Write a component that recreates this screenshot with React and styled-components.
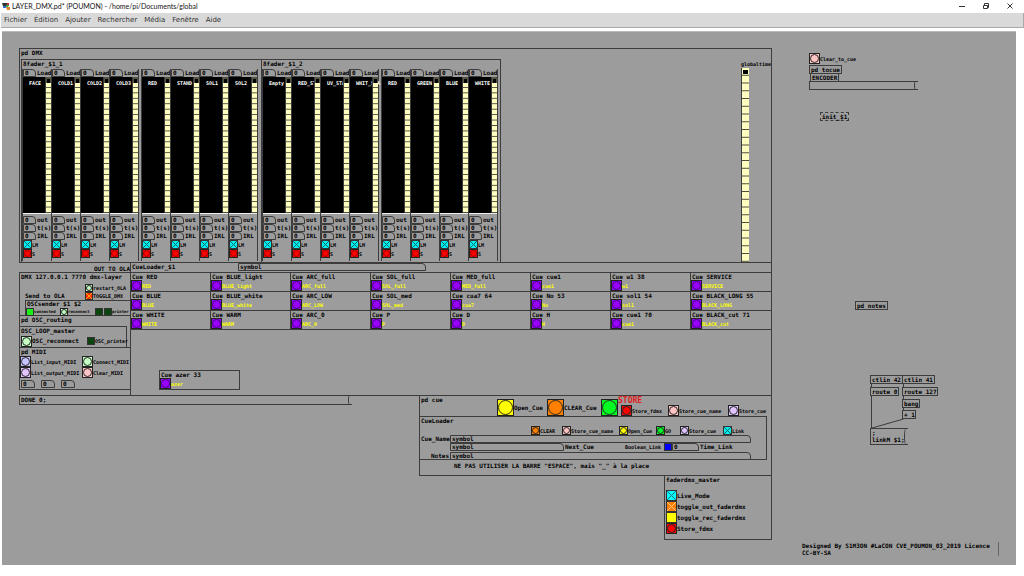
import React from 'react';
import styled, { createGlobalStyle, css } from 'styled-components';

const GlobalStyle = createGlobalStyle`
  * { box-sizing: border-box; }
  body { margin: 0; background: #fff; }
  button, input, label { font: inherit; color: inherit; }
`;

const ink = '#3c3c3c';
const gray = '#9c9c9c';
const mono = '"DejaVu Sans Mono", "Liberation Mono", monospace';

/* ---------- window ---------- */

const Window = styled.div`
  display: flex;
  flex-direction: column;
  min-width: 1000px;
`;

const TitleBar = styled.header`
  display: flex;
  align-items: center;
  height: 13px;
  padding: 0 9px 2px 2px;
  gap: 2px;
  font: 7px/12px Lato, "Open Sans", sans-serif;
  color: #111;
`;

const Title = styled.h1`
  flex: 1;
  margin: 0;
  font-size: 7px;
  font-weight: 400;
`;

const WindowButtons = styled.div`
  display: flex;
  gap: 14px;
`;

const WindowButton = styled.button`
  display: block;
  width: 10px;
  height: 10px;
  padding: 0;
  border: 0;
  background: none;
  svg { display: block; }
`;

const MenuBar = styled.nav`
  display: flex;
  align-items: center;
  gap: 7px;
  height: 15px;
  margin: 0 0 3px 1px;
  padding: 0 3px;
  background: #d9d9d9;
  border-right: 1px solid #aaa;
  border-bottom: 1px solid #aaa;
`;

const MenuItem = styled.button`
  padding: 0;
  border: 0;
  background: none;
  font: 7px/12px "DejaVu Sans", sans-serif;
  color: #333;
`;

const Canvas = styled.main`
  position: relative;
  margin: 0 8px 11px 2px;
  padding: 16px 0 25px 17px;
  background: ${gray};
  border-top: 1px solid #b8b8b8;
  color: #000;
  font: bold 6px/8px ${mono};
`;

/* ---------- controls ---------- */

const Control = styled.label`
  display: flex;
  align-items: center;
  min-width: 0;
  white-space: nowrap;
  font-size: ${p => p.$font || 5}px;
  color: ${p => p.$color || 'inherit'};
`;

const Bang = styled.button`
  display: grid;
  flex: none;
  width: ${p => p.$size}px;
  height: ${p => p.$size}px;
  padding: 0;
  border: 1px solid #222;
  background: ${p => p.$fill};
  font-size: 0;
  line-height: 0;
  &::before {
    content: '';
    border: 1px solid ${p => p.$ring || '#2a2a2a'};
    border-radius: 50%;
  }
`;

const Toggle = styled.input.attrs({ type: 'checkbox' })`
  appearance: none;
  flex: none;
  width: ${p => p.$size}px;
  height: ${p => p.$size}px;
  margin: 0;
  border: 1px solid #333;
  background: ${p => p.$fill};
  ${p => p.$cross && css`
    background:
      linear-gradient(45deg, transparent 45%, ${p.$cross} 45%, ${p.$cross} 55%, transparent 55%),
      linear-gradient(-45deg, transparent 45%, ${p.$cross} 45%, ${p.$cross} 55%, transparent 55%),
      ${p.$fill};
  `}
`;

const Entry = styled.input`
  display: block;
  flex: none;
  width: ${p => p.$width}px;
  height: 8px;
  margin: 0;
  padding: 0 1px;
  border: 1px solid ${ink};
  border-radius: 0 4px 0 0;
  background: ${gray};
  outline: 0;
`;

function BangControl({ text, size, fill, font, color, ring }) {
  return (
    <Control $font={font} $color={color}>
      <Bang type="button" $size={size} $fill={fill} $ring={ring} />
      {text}
    </Control>
  );
}

function ToggleControl({ text, size, fill, cross, font }) {
  return (
    <Control $font={font}>
      <Toggle $size={size} $fill={fill} $cross={cross} defaultChecked={Boolean(cross)} />
      {text}
    </Control>
  );
}

/* ---------- panels ---------- */

const Patch = styled.div`
  width: 753px;
`;

const Heading = styled.h2`
  margin: 0;
  padding-left: 1px;
  height: ${p => p.$height || 9}px;
  font-size: 6px;
  line-height: ${p => p.$line || 7}px;
  font-weight: bold;
  white-space: nowrap;
`;

const DmxPanel = styled.section`
  height: 215px;
  border: 1px solid ${ink};
`;

const DmxBody = styled.div`
  display: flex;
  padding-left: 1px;
`;

const Bank = styled.section`
  width: 240px;
  border: solid ${ink};
  border-width: 1px 0 0 1px;
  &:nth-child(2) { border-right-width: 1px; }
`;

const BankFaders = styled.div`
  display: flex;
  gap: 3px;
`;

const FaderGroup = styled.div`
  display: flex;
  box-shadow: 1px 0 ${ink};
`;

const Fader = styled.div`
  isolation: isolate;
  width: 29px;
  height: 192px;
  border-left: 1px solid ${ink};
  background: ${gray};
`;

const FaderRow = styled.label`
  display: flex;
  gap: 1px;
  height: 8px;
  overflow: hidden;
  white-space: nowrap;
`;

const FaderBody = styled.div`
  display: flex;
  height: 137px;
  margin-bottom: 2px;
  background: #000;
  border-bottom: 1px solid #eee;
`;

const FaderName = styled.span`
  flex: 1;
  min-width: 0;
  padding: 2px 0 0 6px;
  font-size: 5px;
  white-space: nowrap;
  color: #fff;
`;

const Scale = styled.input.attrs({ type: 'range' })`
  appearance: none;
  position: relative;
  display: block;
  flex: none;
  writing-mode: vertical-lr;
  width: ${p => p.$width}px;
  height: ${p => p.$height};
  margin: 0;
  border: solid ${ink};
  border-width: 0 0 0 1px;
  background:
    linear-gradient(#000, #000) 50% 2px / ${p => p.$width - 3}px 4px no-repeat,
    linear-gradient(${p => p.$head}, ${p => p.$head}) 0 0 / 100% 6px no-repeat,
    linear-gradient(to top, #4a4a3c 1px, #ffffbf 1px) 0 0 / 100% 4%;
  &::-webkit-slider-thumb { appearance: none; width: 0; height: 0; }
`;

const GlobalTime = styled.label`
  display: flex;
  flex-direction: column;
  margin-left: 240px;
  padding-top: 1px;
  width: 30px;
  font-size: 5px;
`;

const MidRow = styled.div`
  display: flex;
  height: 132px;
`;

const LeftColumn = styled.div`
  width: 112px;
`;

const OutLabel = styled.p`
  height: 9px;
  margin: 0;
  padding-top: 2px;
  text-align: right;
`;

const OlaPanel = styled.section`
  height: 43px;
  border: solid ${ink};
  border-width: 1px 0 0 1px;
`;

const OlaSend = styled.div`
  display: grid;
  grid-template-columns: 65px 1fr;
  align-items: end;
  height: 17px;
`;

const SendLabel = styled.span`
  padding-left: 5px;
`;

const Sender = styled.section`
  height: 16px;
  margin-left: 5px;
  border: solid ${ink};
  border-width: 1px 0 0 1px;
`;

const SenderRow = styled.div`
  display: grid;
  grid-template-columns: 34px 35px 9px 1fr;
  height: 8px;
`;

const Routing = styled.section`
  height: 11px;
  border: solid ${ink};
  border-width: 1px 0 0 1px;
`;

const LoopMaster = styled.section`
  width: 108px;
  height: 21px;
  border: solid ${ink};
  border-width: 1px 1px 0 1px;
`;

const LoopRow = styled.div`
  display: grid;
  grid-template-columns: 66px 1fr;
  padding-left: 1px;
  height: 12px;
`;

const Midi = styled.section`
  height: 43px;
  border: solid ${ink};
  border-width: 1px 0 1px 1px;
`;

const MidiGrid = styled.div`
  display: grid;
  grid-template-columns: 62px 1fr;
  grid-auto-rows: 11px;
`;

const MidiNumbers = styled.div`
  display: flex;
  gap: 6px;
  padding: 2px 0 0 1px;
`;

const CueLoader = styled.section`
  flex: 1;
  border: solid ${ink};
  border-width: 0 1px;
`;

const CueLoaderHead = styled.label`
  display: grid;
  grid-template-columns: 106px 1fr;
  height: 9px;
  padding-left: 1px;
`;

const CueGrid = styled.div`
  display: grid;
  grid-template-columns: repeat(8, 80px);
  grid-auto-rows: 19px;
  border-bottom: 1px solid ${ink};
`;

const Cue = styled.section`
  border-top: 1px solid ${ink};
  box-shadow: -1px 0 ${ink};
`;

const LooseCue = styled.section`
  width: 81px;
  height: 20px;
  margin: 40px 0 0 28px;
  border: 1px solid ${ink};
`;

const BottomRow = styled.div`
  display: flex;
  justify-content: space-between;
  align-items: flex-start;
  box-shadow: inset 0 1px ${ink};
`;

const Message = styled.div`
  position: relative;
  width: ${p => p.$width}px;
  height: ${p => p.$height || 9}px;
  padding: 0 1px;
  border: 1px solid ${ink};
  border-right: 0;
  white-space: pre;
  line-height: ${p => p.$line || 8}px;
  &::after {
    content: '';
    position: absolute;
    top: -1px;
    right: 0;
    width: 3px;
    height: calc(100% + 2px);
    border-left: 1px solid ${ink};
    border-radius: 50% 0 0 50%;
  }
`;

const CuePanel = styled.section`
  width: 353px;
  height: 81px;
  border: 1px solid ${ink};
`;

const CueActions = styled.div`
  display: grid;
  grid-template-columns: 77px 50px 54px 17px 50px 60px 1fr;
  align-items: end;
  height: 20px;
  & > h2 { align-self: start; }
`;

const StoreStack = styled.div`
  display: flex;
  flex-direction: column;
  & > label { padding-left: 3px; height: 11px; }
`;

const StoreTitle = styled.strong`
  font-size: 8px;
  line-height: 9px;
  color: #e02020;
`;

const CueForm = styled.section`
  width: 347px;
  height: 44px;
  border: solid ${ink};
  border-width: 1px 1px 1px 0;
`;

const CueTools = styled.div`
  display: grid;
  grid-template-columns: 31px 57px 37px 24px 43px 1fr;
  height: 9px;
  padding-left: 111px;
`;

const FormRow = styled.div`
  display: flex;
  height: ${p => p.$height || 8}px;
  white-space: nowrap;
`;

const FormLabel = styled.label`
  width: ${p => p.$width}px;
  padding: 0 1px;
  text-align: ${p => p.$align || 'left'};
  font-size: ${p => p.$font || 6}px;
`;

const Warning = styled.p`
  margin: 0;
  padding: 2px 0 0 34px;
  white-space: nowrap;
`;

const Master = styled.section`
  width: 108px;
  height: 64px;
  margin-left: auto;
  border: solid ${ink};
  border-width: 0 1px 1px;
`;

const MasterList = styled.div`
  display: grid;
  grid-auto-rows: 11px;
  padding: 5px 0 0 1px;
`;

/* ---------- free objects of the patch ---------- */

const Node = styled.div`
  position: absolute;
  left: ${p => p.$x}px;
  top: ${p => p.$y}px;
`;

const ObjectBox = styled.div`
  height: 9px;
  padding: 0 1px;
  width: ${p => p.$width}px;
  border: 1px ${p => (p.$dashed ? 'dashed' : 'solid')} ${ink};
  line-height: 8px;
  white-space: nowrap;
`;

const Wires = styled.svg`
  position: absolute;
  left: 868px;
  top: 352px;
`;

const Credit = styled.p`
  margin: 0;
  width: 197px;
  line-height: 7px;
  border-right: 1px solid #666;
`;

/* ---------- data ---------- */

const menus = ['Fichier', 'Édition', 'Ajouter', 'Rechercher', 'Média', 'Fenêtre', 'Aide'];

const banks = [
  { title: '8fader_$1_1', groups: [['FACE', 'COLD1', 'COLD2', 'COLD3'], ['RED', 'STAND', 'SOL1', 'SOL2']] },
  { title: '8fader_$1_2', groups: [['Empty', 'RED_STA', 'UV_STA', 'WHIT_STA'], ['RED', 'GREEN', 'BLUE', 'WHITE']] },
];

const cues = [
  ['RED', 'RED'], ['BLUE_light', 'BLUE_light'], ['ARC_full', 'ARC_full'], ['SOL_full', 'SOL_full'],
  ['MED_full', 'MED_full'], ['cue1', 'cue1'], ['w1 38', 'w1'], ['SERVICE', 'SERVICE'],
  ['BLUE', 'BLUE'], ['BLUE_white', 'BLUE_white'], ['ARC_LOW', 'ARC_LOW'], ['SOL_med', 'SOL_med'],
  ['cua7 64', 'cua7'], ['No 53', 'No'], ['sol1 54', 'sol1'], ['BLACK_LONG 55', 'BLACK_LONG'],
  ['WHITE', 'WHITE'], ['WARM', 'WARM'], ['ARC_0', 'ARC_0'], ['P', 'P'],
  ['D', 'D'], ['H', 'H'], ['cue1 70', 'cue1'], ['BLACK_cut 71', 'BLACK_cut'],
];

const objects = [
  { x: 807, y: 33, width: 33, text: 'pd tocue' },
  { x: 808, y: 41, width: 29, text: 'ENCODER' },
  { x: 818, y: 80, width: 29, text: 'init_$1', dashed: true },
  { x: 853, y: 269, width: 33, text: 'pd notes' },
  { x: 868, y: 343, width: 33, text: 'ctlin 42' },
  { x: 900, y: 343, width: 33, text: 'ctlin 41' },
  { x: 868, y: 355, width: 29, text: 'route 0' },
  { x: 900, y: 355, width: 36, text: 'route 127' },
  { x: 900, y: 367, width: 18, text: 'bang' },
  { x: 900, y: 378, width: 14, text: '+ 1' },
];

function FaderStrip({ name }) {
  return (
    <Fader>
      <FaderRow><Entry $width={13} defaultValue="0" />Load</FaderRow>
      <FaderBody>
        <FaderName>{name}</FaderName>
        <Scale $width={6} $height="136px" $head="#55553f" aria-label={name} defaultValue={0} />
      </FaderBody>
      {['out', 't(s)', 'IRL'].map(t => (
        <FaderRow key={t}><Entry $width={13} defaultValue="0" />{t}</FaderRow>
      ))}
      <ToggleControl size={9} fill="#00f0f0" cross="#146a6a" text="LM" />
      <BangControl size={9} fill="#ff0000" ring="#a00000" text="S" />
    </Fader>
  );
}

function CueContent({ title, name }) {
  return (
    <>
      <Heading $height={7}>Cue {title}</Heading>
      <BangControl size={11} fill="#9900ff" ring="#45007a" color="#ffff00" text={name} />
    </>
  );
}

export default function App() {
  return (
    <>
      <GlobalStyle />
      <Window>
        <TitleBar>
          <svg width="8" height="8" viewBox="0 0 8 8" aria-hidden="true">
            <path d="M0 1h6l1 3H1z" fill="#333" />
            <path d="M1 4h3v2H1z" fill="#2c6fd0" />
            <path d="M4 3h3l-1 2H4z" fill="#36a852" />
            <path d="M4 5h4v3H5z" fill="#e08a2a" />
            <path d="M5 1h2v2H5z" fill="#c33" />
          </svg>
          <Title>LAYER_DMX.pd* (POUMON) - /home/pi/Documents/global</Title>
          <WindowButtons>
            <WindowButton aria-label="Minimize">
              <svg width="10" height="10"><path d="M2 5.5h6" stroke="#333" /></svg>
            </WindowButton>
            <WindowButton aria-label="Restore">
              <svg width="10" height="10" fill="none" stroke="#333">
                <path d="M2.500 4.500h4v3h-4zM3.500 4.500v-2h4v4h-1" />
              </svg>
            </WindowButton>
            <WindowButton aria-label="Close">
              <svg width="10" height="10"><path d="M2.500 2.500l5 5m0-5l-5 5" stroke="#333" /></svg>
            </WindowButton>
          </WindowButtons>
        </TitleBar>
        <MenuBar>
          {menus.map(m => <MenuItem key={m}>{m}</MenuItem>)}
        </MenuBar>

        <Canvas>
          <Patch>
            <DmxPanel>
              <Heading $height={10} $line={8}>pd DMX</Heading>
              <DmxBody>
                {banks.map(bank => (
                  <Bank key={bank.title}>
                    <Heading>{bank.title}</Heading>
                    <BankFaders>
                      {bank.groups.map((group, i) => (
                        <FaderGroup key={i}>
                          {group.map(name => <FaderStrip key={name} name={name} />)}
                        </FaderGroup>
                      ))}
                    </BankFaders>
                  </Bank>
                ))}
                <GlobalTime>
                  globaltime
                  <Scale $width={8} $height="194px" $head="#ffffbf" defaultValue={0} />
                </GlobalTime>
              </DmxBody>
            </DmxPanel>

            <MidRow>
              <LeftColumn>
                <OutLabel>OUT TO OLA</OutLabel>
                <OlaPanel>
                  <Heading $height={10} $line={8}>DMX 127.0.0.1 7770 dmx-layer</Heading>
                  <OlaSend>
                    <SendLabel>Send to OLA</SendLabel>
                    <div>
                      <BangControl size={8} fill="#c4ffc4" text="restart_OLA" />
                      <ToggleControl size={8} fill="#ff2a00" cross="#ffb000" text="TOGGLE_DMX" />
                    </div>
                  </OlaSend>
                  <Sender>
                    <Heading $height={7} $line={6}>OSCsender $1 $2</Heading>
                    <SenderRow>
                      <ToggleControl size={8} font={4} fill="#19f019" text="connected" />
                      <BangControl size={8} font={4} fill="#c4ffc4" text="reconnect" />
                      <ToggleControl size={8} font={4} fill="#0c4410" />
                      <ToggleControl size={8} font={4} fill="#0c4410" text="printer" />
                    </SenderRow>
                  </Sender>
                </OlaPanel>
                <Routing><Heading>pd OSC_routing</Heading></Routing>
                <LoopMaster>
                  <Heading $height={8}>OSC_LOOP_master</Heading>
                  <LoopRow>
                    <BangControl size={11} font={6} fill="#c4ffc4" text="OSC_reconnect" />
                    <ToggleControl size={8} fill="#0c4410" text="OSC_printer" />
                  </LoopRow>
                </LoopMaster>
                <Midi>
                  <Heading $height={8} $line={8}>pd MIDI</Heading>
                  <MidiGrid>
                    <BangControl size={11} fill="#c8c4ff" text="List_input_MIDI" />
                    <BangControl size={11} fill="#c4ffc4" text="Connect_MIDI" />
                    <BangControl size={11} fill="#e4c4ff" text="List_output_MIDI" />
                    <BangControl size={11} fill="#ffc4c4" text="Clear_MIDI" />
                  </MidiGrid>
                  <MidiNumbers>
                    {['a', 'b', 'c'].map(k => (
                      <Entry key={k} $width={14} defaultValue="0" aria-label={`MIDI ${k}`} />
                    ))}
                  </MidiNumbers>
                </Midi>
              </LeftColumn>

              <CueLoader>
                <CueLoaderHead>
                  CueLoader_$1
                  <Entry $width={188} defaultValue="symbol" />
                </CueLoaderHead>
                <CueGrid>
                  {cues.map(([title, name]) => (
                    <Cue key={title}><CueContent title={title} name={name} /></Cue>
                  ))}
                </CueGrid>
                <LooseCue><CueContent title="azer 33" name="azer" /></LooseCue>
              </CueLoader>
            </MidRow>

            <BottomRow>
              <Message $width={333} $height={10}>DONE 0;</Message>
              <CuePanel>
                <CueActions>
                  <Heading>pd cue</Heading>
                  <BangControl size={17} font={6} fill="#ffff00" text="Open_Cue" />
                  <BangControl size={17} font={6} fill="#ff8000" text="CLEAR_Cue" />
                  <Bang type="button" aria-label="Store" $size={17} $fill="#00ff20" />
                  <StoreStack>
                    <StoreTitle>STORE</StoreTitle>
                    <BangControl size={11} fill="#ff0000" text="Store_fdmx" />
                  </StoreStack>
                  <BangControl size={11} fill="#ffc4c4" text="Store_cue_name" />
                  <BangControl size={11} fill="#e0c4ff" text="Store_cue" />
                </CueActions>
                <CueForm>
                  <Heading>CueLoader</Heading>
                  <CueTools>
                    <BangControl size={9} fill="#ff8000" text="CLEAR" />
                    <BangControl size={9} fill="#ffc4c4" text="Store_cue_name" />
                    <BangControl size={9} fill="#ffff00" text="Open_Cue" />
                    <BangControl size={9} fill="#00ff20" text="GO" />
                    <BangControl size={9} fill="#e0c4ff" text="Store_cue" />
                    <ToggleControl size={9} fill="#00f0f0" cross="#146a6a" text="Link" />
                  </CueTools>
                  <FormRow>
                    <FormLabel $width={30} $align="right" htmlFor="cue-name">Cue_Name</FormLabel>
                    <Entry id="cue-name" $width={301} defaultValue="symbol" />
                  </FormRow>
                  <FormRow $height={9}>
                    <FormLabel as="span" $width={30} />
                    <Entry id="next-cue" $width={114} defaultValue="symbol" />
                    <FormLabel $width={60} htmlFor="next-cue">Next_Cue</FormLabel>
                    <FormLabel $width={40} $font={5} htmlFor="boolean-link">Boolean_Link</FormLabel>
                    <Toggle id="boolean-link" $size={8} $fill="#0000ff" />
                    <Entry id="time-link" $width={27} defaultValue="0" />
                    <FormLabel $width={40} htmlFor="time-link">Time_Link</FormLabel>
                  </FormRow>
                  <FormRow>
                    <FormLabel $width={30} $align="right" htmlFor="notes">Notes</FormLabel>
                    <Entry id="notes" $width={301} defaultValue="symbol" />
                  </FormRow>
                </CueForm>
                <Warning>NE PAS UTILISER LA BARRE "ESPACE", mais "_" à la place</Warning>
              </CuePanel>
            </BottomRow>

            <Master>
              <Heading>faderdmx_master</Heading>
              <MasterList>
                <ToggleControl size={11} font={6} fill="#00ffff" cross="#207878" text="Live_Mode" />
                <ToggleControl size={11} font={6} fill="#ff8000" cross="#ffc080" text="toggle_out_faderdmx" />
                <ToggleControl size={11} font={6} fill="#ffff00" text="toggle_rec_faderdmx" />
                <BangControl size={11} font={6} fill="#ff0000" text="Store_fdmx" />
              </MasterList>
            </Master>
          </Patch>

          <Node $x={807} $y={21}>
            <BangControl size={11} fill="#ffc4c4" text="Clear_to_cue" />
          </Node>
          {objects.map(o => (
            <Node key={o.text} $x={o.x} $y={o.y}>
              <ObjectBox $width={o.width} $dashed={o.dashed}>{o.text}</ObjectBox>
            </Node>
          ))}
          <Node $x={807} $y={49}><Message $width={109} /></Node>
          <Node $x={868} $y={396}>
            <Message $width={38} $height={17} $line={7}>{';\nlinkM $1;'}</Message>
          </Node>
          <Wires width="40" height="46" fill="none" stroke={ink} aria-hidden="true">
            <path d="M1.500 0v3M1.500 12v32M33.500 0v3M33.500 12v3M33.500 23v3M33.500 35L2 44" />
          </Wires>
          <Node $x={800} $y={510}>
            <Credit>Designed By S1M3ON #LaCON CVE_POUMON_03_2019 Licence<br />CC-BY-SA</Credit>
          </Node>
        </Canvas>
      </Window>
    </>
  );
}
